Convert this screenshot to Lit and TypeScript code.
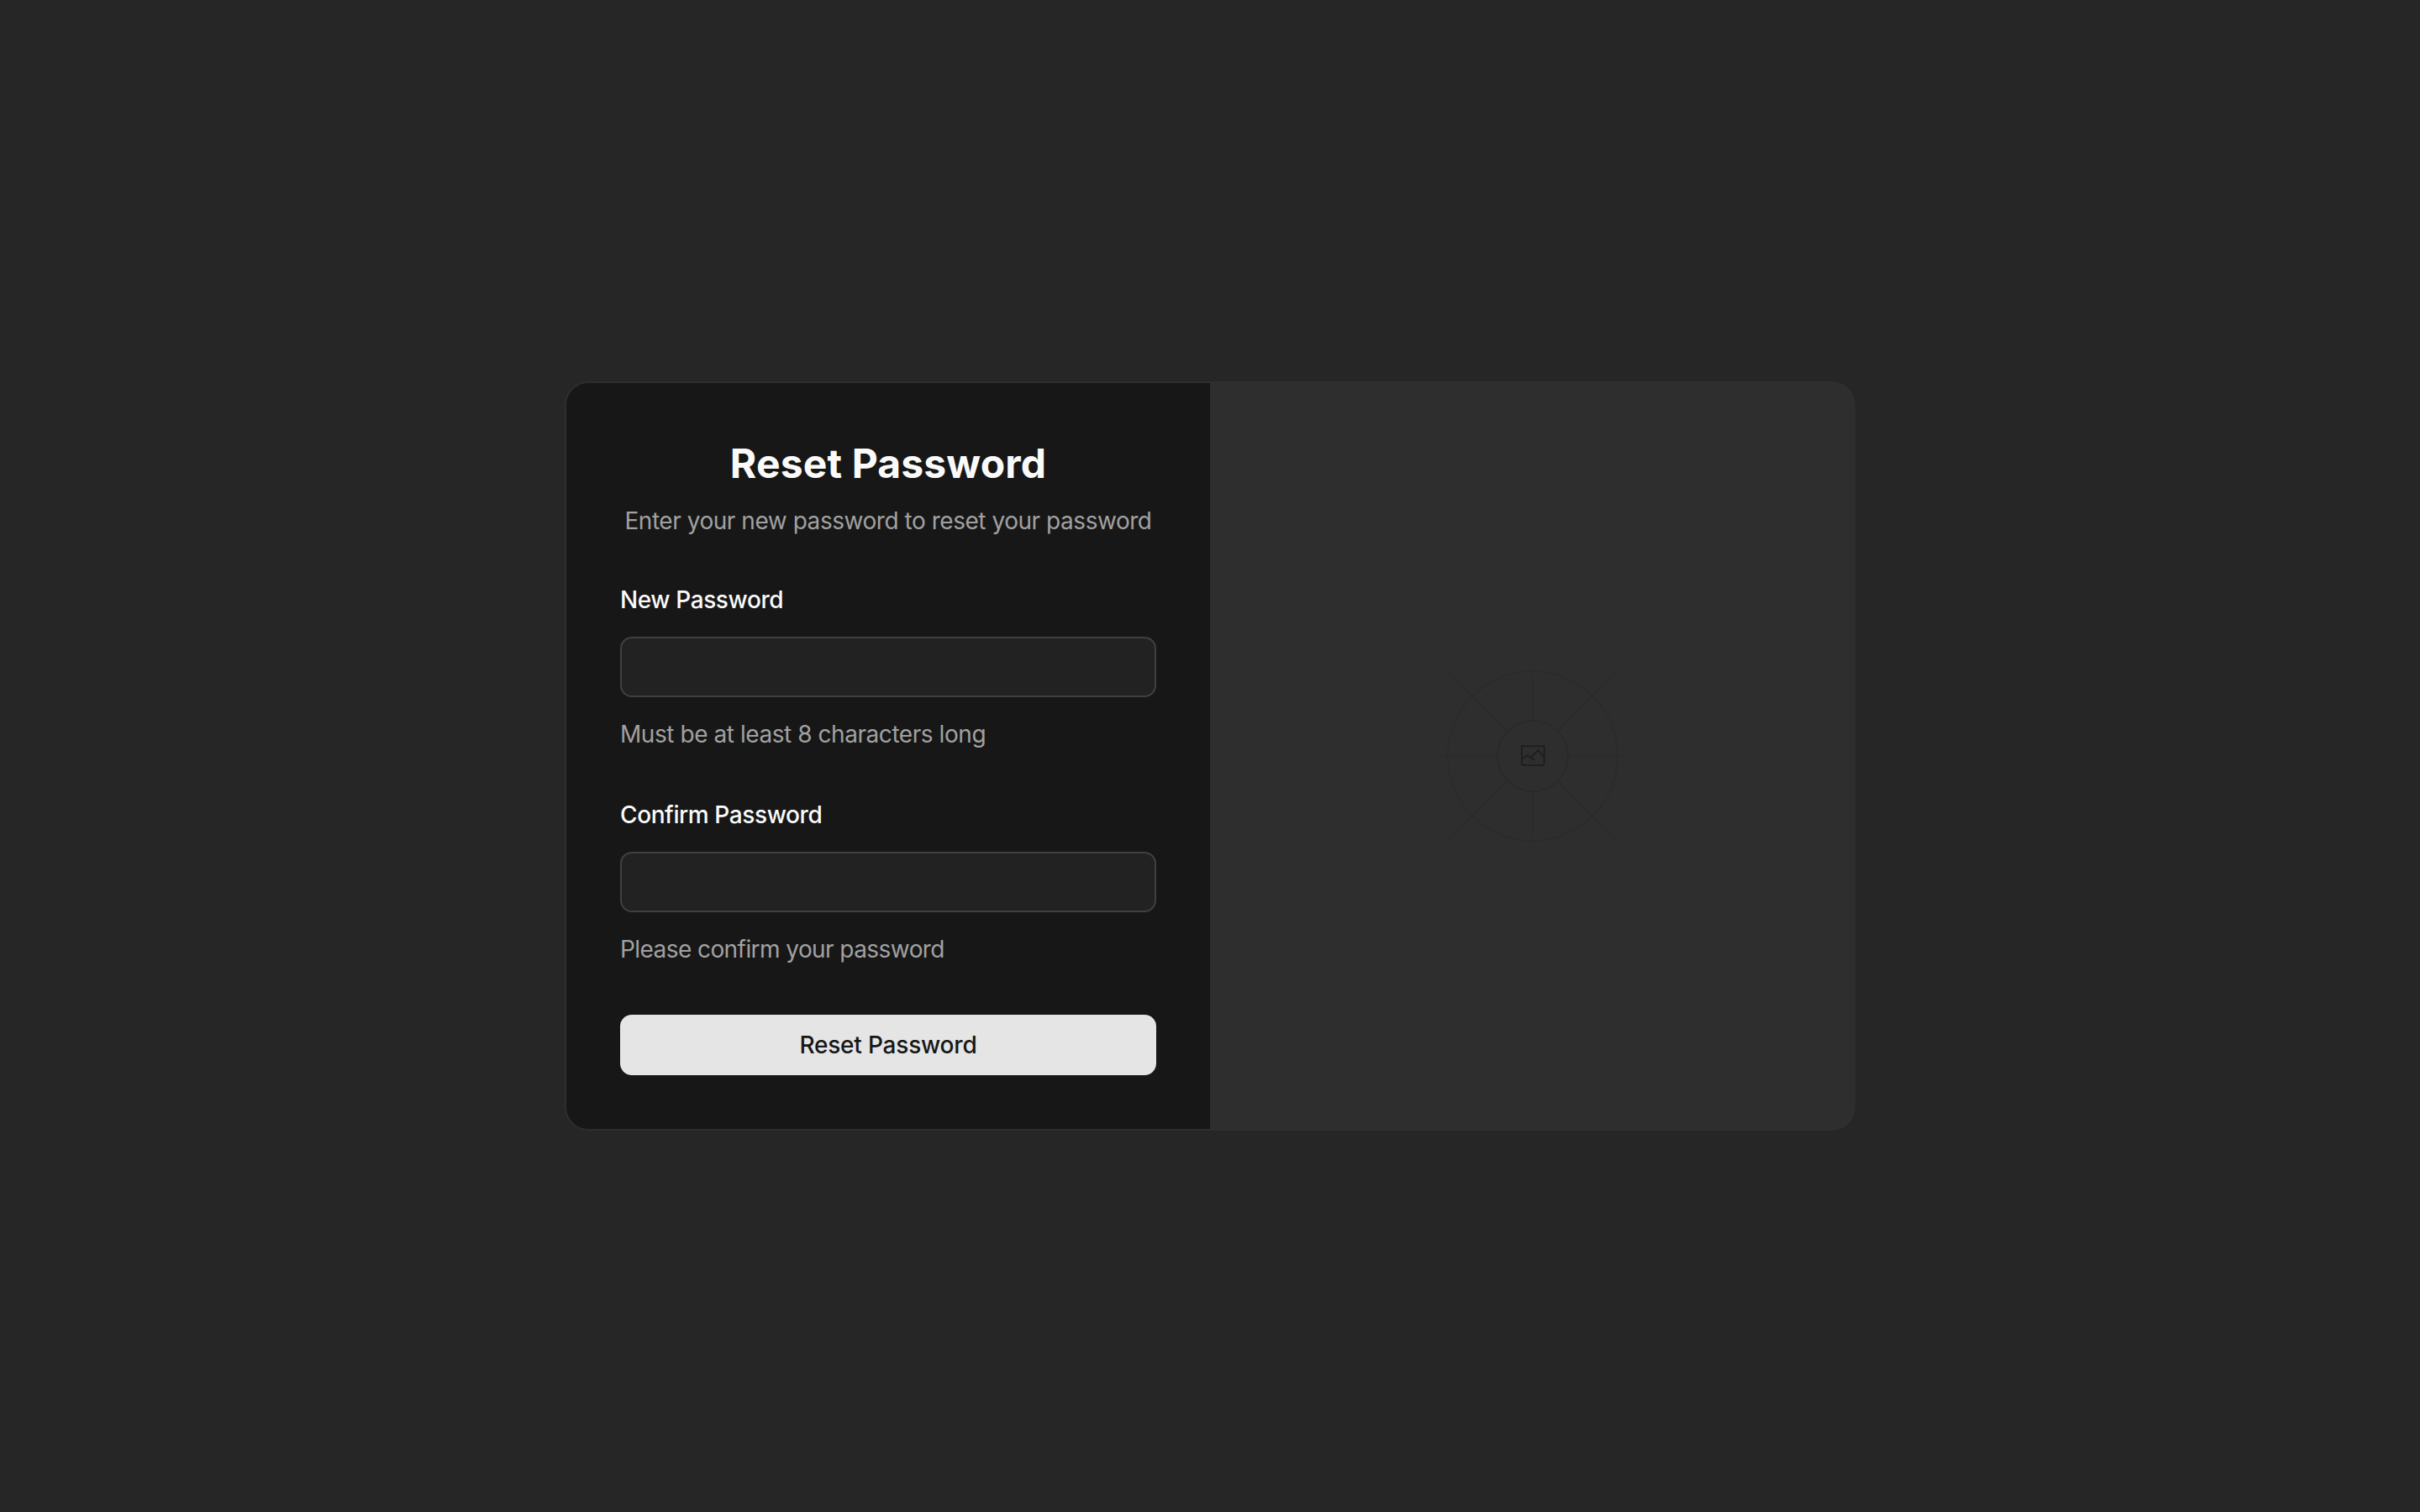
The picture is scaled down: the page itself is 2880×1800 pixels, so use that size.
import { css, html, LitElement, svg } from "lit";
import { customElement } from "lit/decorators.js";

const axes = [
  [0, -42, 0, -126],
  [0, 42, 0, 126],
  [-42, 0, -118, 0],
  [42, 0, 118, 0],
];

const diagonals = [
  [-30, -30, -130, -130],
  [30, -30, 130, -130],
  [-30, 30, -130, 130],
  [30, 30, 130, 130],
];

@customElement("app-root")
export class AppRoot extends LitElement {
  static styles = css`
    :host {
      display: flex;
      align-items: center;
      justify-content: center;
      min-height: 1800px;
      background: #262626;
      font-family: Inter, "Liberation Sans", sans-serif;
    }

    .card {
      display: grid;
      grid-template-columns: 1fr 1fr;
      width: 1536px;
      box-sizing: border-box;
      border-radius: 28px;
      overflow: hidden;
      background: #2e2e2e;
    }

    .form {
      display: flex;
      flex-direction: column;
      gap: 56px;
      padding: 64px;
      background: #171717;
      border: 2px solid #2e2e2e;
      border-right: none;
      border-radius: 28px 0 0 28px;
    }

    .header {
      display: flex;
      flex-direction: column;
      align-items: center;
      gap: 16px;
      margin-bottom: -2px;
    }

    h1 {
      margin: 0;
      font-size: 48px;
      line-height: 64px;
      font-weight: 700;
      letter-spacing: 0.15px;
      color: #fafafa;
    }

    .subtitle {
      margin: 0;
      font-size: 28px;
      line-height: 40px;
      letter-spacing: -0.46px;
      white-space: nowrap;
      color: #a1a1a1;
    }

    .field {
      display: flex;
      flex-direction: column;
      gap: 24px;
    }

    label {
      font-size: 28px;
      line-height: 40px;
      font-weight: 500;
      letter-spacing: -0.4px;
      color: #fafafa;
    }

    input {
      height: 72px;
      box-sizing: border-box;
      padding: 0 24px;
      background: #222222;
      border: 2px solid #404040;
      border-radius: 14px;
      outline: none;
      color: #fafafa;
      font: inherit;
    }

    .hint {
      font-size: 28px;
      line-height: 40px;
      letter-spacing: -0.44px;
      color: #a1a1a1;
    }

    .hint.tight {
      letter-spacing: -0.57px;
    }

    button {
      height: 72px;
      margin-top: 2px;
      border: none;
      border-radius: 14px;
      background: #e5e5e5;
      color: #171717;
      font: 500 28px/40px Inter, "Liberation Sans", sans-serif;
      letter-spacing: -0.2px;
    }

    .media {
      display: flex;
      align-items: center;
      justify-content: center;
      background: #2e2e2e;
    }

    svg {
      display: block;
      width: 400px;
      height: 400px;
    }
  `;

  renderPlaceholder() {
    return html`
      <svg viewBox="-200 -200 400 400" fill="none" aria-hidden="true">
        <defs>
          <radialGradient id="axis" gradientUnits="userSpaceOnUse" cx="0" cy="0" r="124">
            <stop offset="0.7" stop-color="#2a2a2a"></stop>
            <stop offset="1" stop-color="#2e2e2e"></stop>
          </radialGradient>
          <radialGradient id="diagonal" gradientUnits="userSpaceOnUse" cx="0" cy="0" r="184">
            <stop offset="0.5" stop-color="#2a2a2a"></stop>
            <stop offset="1" stop-color="#2e2e2e"></stop>
          </radialGradient>
        </defs>
        ${axes.map(
          ([x1, y1, x2, y2]) =>
            svg`<line x1=${x1} y1=${y1} x2=${x2} y2=${y2} stroke="url(#axis)" stroke-width="1.5"></line>`,
        )}
        ${diagonals.map(
          ([x1, y1, x2, y2]) =>
            svg`<line x1=${x1} y1=${y1} x2=${x2} y2=${y2} stroke="url(#diagonal)" stroke-width="2"></line>`,
        )}
        <circle r="101" stroke="#2b2b2b" stroke-width="1.5"></circle>
        <circle r="42" stroke="#292929" stroke-width="1.5"></circle>
        <path
          d="M-13 -11.7H13.7V8.5Q13.7 11 11.2 11H-10.5Q-13 11-13 8.5Z"
          stroke="#1f1f1f"
          stroke-width="2"
        ></path>
        <path
          d="M-12.7 3.3L-6.7 -.7L2.3 5M-1.7 1L6.7 -6.7L14 1.7"
          stroke="#1f1f1f"
          stroke-width="2"
        ></path>
      </svg>
    `;
  }

  render() {
    return html`
      <div class="card">
        <form class="form">
          <div class="header">
            <h1>Reset Password</h1>
            <p class="subtitle">Enter your new password to reset your password</p>
          </div>
          <div class="field">
            <label for="new-password">New Password</label>
            <input id="new-password" type="password" />
            <span class="hint">Must be at least 8 characters long</span>
          </div>
          <div class="field">
            <label for="confirm-password">Confirm Password</label>
            <input id="confirm-password" type="password" />
            <span class="hint tight">Please confirm your password</span>
          </div>
          <button type="button">Reset Password</button>
        </form>
        <div class="media">${this.renderPlaceholder()}</div>
      </div>
    `;
  }
}
